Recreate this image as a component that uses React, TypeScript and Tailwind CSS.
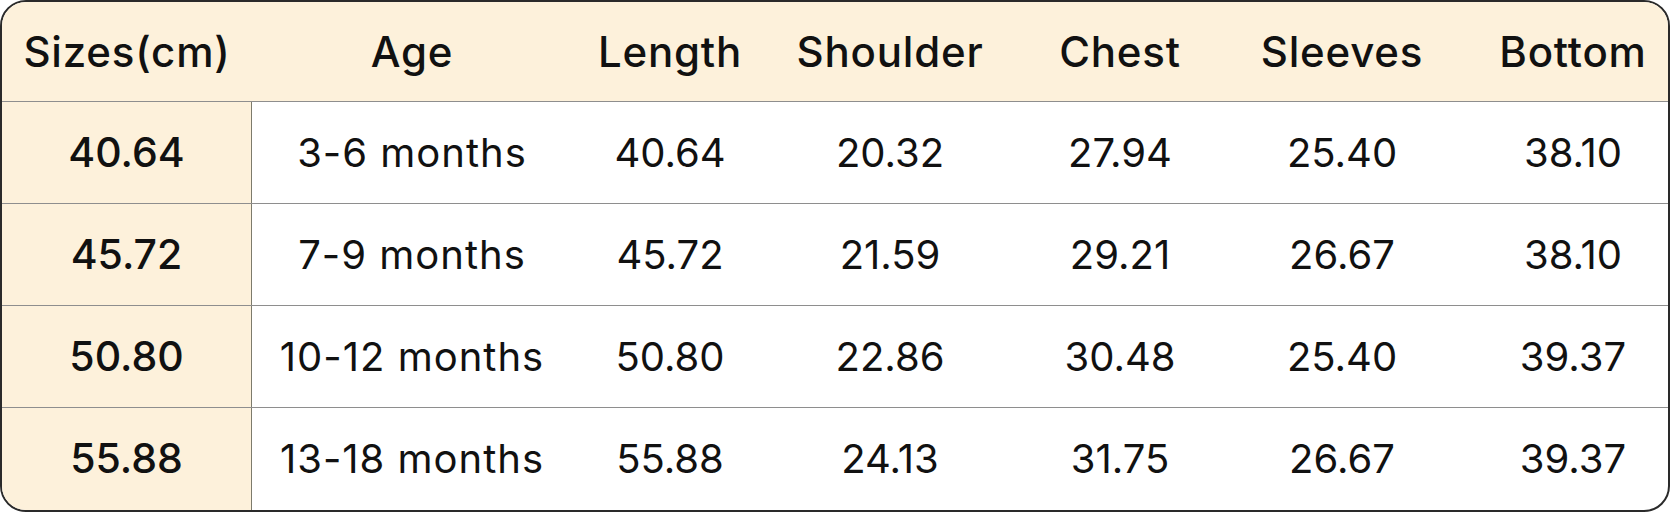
const headers = ["Sizes(cm)", "Age", "Length", "Shoulder", "Chest", "Sleeves", "Bottom"];

const rows = [
  ["40.64", "3-6 months", "40.64", "20.32", "27.94", "25.40", "38.10"],
  ["45.72", "7-9 months", "45.72", "21.59", "29.21", "26.67", "38.10"],
  ["50.80", "10-12 months", "50.80", "22.86", "30.48", "25.40", "39.37"],
  ["55.88", "13-18 months", "55.88", "24.13", "31.75", "26.67", "39.37"],
];

const cols = "grid grid-cols-[250px_320px_196px_244px_216px_228px_1fr]";

export default function App() {
  return (
    <div className="bg-white w-[1671px] h-[512px]">
      <div
        className="w-[1670px] h-[512px] rounded-[26px] border-2 border-[#2a2a2a] overflow-hidden text-[#111]"
        style={{ fontFamily: "Inter, 'Open Sans', sans-serif" }}
      >
        <div className={`${cols} h-[100px] bg-[#fdf1db] border-b-[1.5px] border-[#8e8e8e] items-center`}>
          {headers.map((h, i) => (
            <div
              key={h}
              className={`text-center text-[42px] font-medium tracking-[0.8px] ${i === 6 ? "pl-[22px]" : ""}`}
            >
              {h}
            </div>
          ))}
        </div>
        {rows.map((row, r) => (
          <div
            key={r}
            className={`${cols} h-[102px] ${r < 3 ? "border-b-[1.5px] border-[#8e8e8e]" : ""}`}
          >
            {row.map((cell, i) => (
              <div
                key={i}
                className={
                  i === 0
                    ? "flex items-center justify-center bg-[#fdf1db] border-r-[1.5px] border-[#7d7b6c] text-[41px] font-medium"
                    : `flex items-center justify-center text-[40px] font-normal ${i === 1 ? "tracking-[1px]" : ""} ${i === 6 ? "pl-[22px]" : ""}`
                }
              >
                {cell}
              </div>
            ))}
          </div>
        ))}
      </div>
    </div>
  );
}
